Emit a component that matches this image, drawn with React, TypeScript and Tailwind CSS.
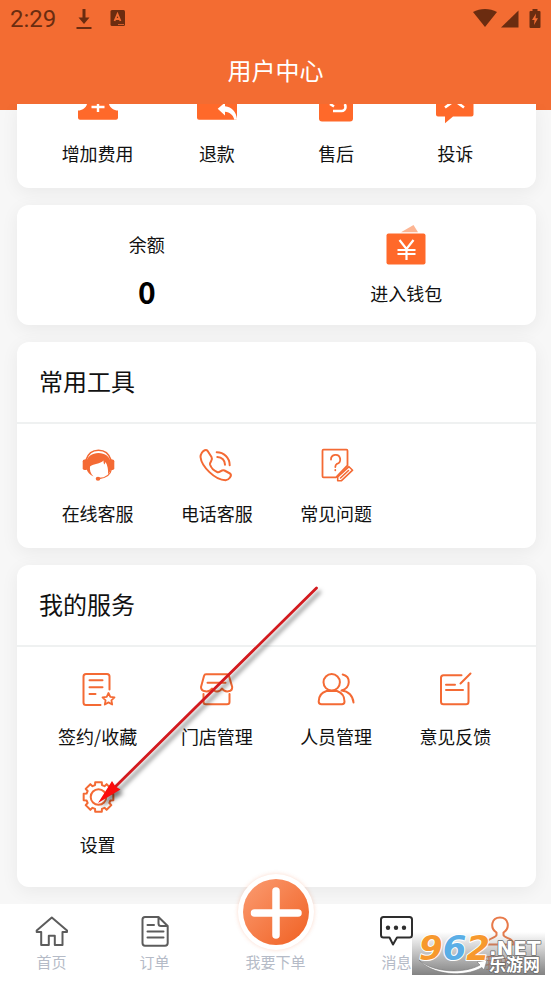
import type { ReactNode } from "react";

type Item = { label: string; icon: ReactNode };

const LineIcon = ({ children }: { children: ReactNode }) => (
  <svg
    className="size-8 overflow-visible"
    viewBox="0 0 32 32"
    fill="none"
    stroke="currentColor"
    strokeWidth="2"
    strokeLinecap="round"
    strokeLinejoin="round"
    aria-hidden="true"
  >
    {children}
  </svg>
);

// outline of a cog with eight flat teeth
const gearPath = (cx: number, cy: number, outer: number, inner: number) => {
  const points: string[] = [];
  for (let i = 0; i < 8; i++) {
    const mid = (i * Math.PI) / 4;
    const corners = [
      [inner, mid - 0.28],
      [outer, mid - 0.22],
      [outer, mid + 0.22],
      [inner, mid + 0.28],
    ];
    corners.forEach(([r, a]) => {
      points.push(
        `${(cx + r * Math.sin(a)).toFixed(2)} ${(cy - r * Math.cos(a)).toFixed(2)}`
      );
    });
  }
  return `M${points.join("L")}Z`;
};

const orderActions: Item[] = [
  {
    label: "增加费用",
    icon: (
      <svg className="h-5 w-10" viewBox="0 0 40 20" aria-hidden="true">
        <path
          d="M9 0C8 4 4 6.5 0 6.5V14a2 2 0 0 0 2 1.700H38a2 2 0 0 0 2-1.700V6.500C36 6.500 32 4 31 0Z"
          fill="#ff692a"
        />
        <path d="M20 0V8M13.500 3H26.500" stroke="#fff" strokeWidth="2.400" />
      </svg>
    ),
  },
  {
    label: "退款",
    icon: (
      <svg className="h-5 w-10" viewBox="0 0 40 20" aria-hidden="true">
        <path d="M0 0H40V13.700a2 2 0 0 1-2 2H2a2 2 0 0 1-2-2Z" fill="#ff692a" />
        <path
          d="M20.700 4.700L28-1.500V2.200C35 3 39 7.500 40 15L37.500 16C36 11 33 8.200 28 7.800V11.500Z"
          fill="#fff"
        />
      </svg>
    ),
  },
  {
    label: "售后",
    icon: (
      <svg className="h-5 w-10" viewBox="0 0 40 20" aria-hidden="true">
        <path d="M3 0H37V14.500a3 3 0 0 1-3 3H6a3 3 0 0 1-3-3Z" fill="#ff692a" />
        <path
          d="M17 7H25.500A4 4 0 0 0 29.500 3Q29.500 1 28.500 0M14 0L18 2.500"
          fill="none"
          stroke="#fff"
          strokeWidth="2.600"
        />
      </svg>
    ),
  },
  {
    label: "投诉",
    icon: (
      <svg className="h-5 w-10" viewBox="0 0 40 20" aria-hidden="true">
        <path d="M1 0H38.500V10.500a2 2 0 0 1-2 2H18L10 19.300V12.500H3a2 2 0 0 1-2-2Z" fill="#ff692a" />
        <path d="M10 3.500L19.500-3.500L29 3.500" fill="none" stroke="#fff" strokeWidth="2.600" />
      </svg>
    ),
  },
];

const tools: Item[] = [
  {
    label: "在线客服",
    icon: (
      <LineIcon>
        <path d="M4 11C6 4.500 11 1.200 16.500 1.200S27 4.500 29 11" strokeWidth="1.600" />
        <path
          d="M4 14C5 7.500 10 4 16.500 4S28 7.500 29 14V20C28.500 22 27.500 23.500 26 25.500C26.500 21 25.500 16 23.500 13L22.500 15.500C21.500 14.500 21.500 13 21.500 11.500C18 15 12 14.500 8 17.500C7.500 21 8.500 24.500 11.500 27.500C7.500 25.500 5.500 23 4.500 20Z"
          fill="currentColor"
          stroke="none"
        />
        <rect x="0.700" y="10.500" width="5" height="10.500" rx="1.800" fill="currentColor" stroke="none" />
        <rect x="27.300" y="10.500" width="5" height="10.500" rx="1.800" fill="currentColor" stroke="none" />
        <path d="M29.500 20C28.500 25.500 24 29 17 29.500" strokeWidth="1.300" />
        <ellipse cx="16" cy="29.700" rx="2.300" ry="2" fill="currentColor" stroke="none" />
      </LineIcon>
    ),
  },
  {
    label: "电话客服",
    icon: (
      <LineIcon>
        <path d="M1 3.500C2.500 1.500 5 .2 6.500 1.800L10.500 8C12.500 11.500 8.500 12.500 9 15.500C10 18.500 13.500 22 16.500 23.200C19 24 20 20.500 23.500 21.500L29 24.500C31.500 26.500 28 31 24.500 31.300C14 31 .5 17.500-.5 8C-.5 6 0 5 1 3.500Z" />
        <path d="M15.700 3.300C23 3.300 28.700 9 28.700 16.300M16.300 8C21 8 24 11.500 24 15.700" />
      </LineIcon>
    ),
  },
  {
    label: "常见问题",
    icon: (
      <LineIcon>
        <path d="M16 28.300H3.500Q2.500 28.300 2.500 27.300V1.700Q2.500.7 3.500.7H26.500Q27.500.7 27.500 1.700V16.500L16 28.300" strokeWidth="1.800" />
        <path d="M11 10.500A4.600 4.600 0 1 1 17 14.800Q15.300 15.800 15.300 18M15.300 21V21.300" strokeWidth="1.800" />
        <path d="M17.700 28L29 17.700L32.600 21.200L21.500 31.700H17.700ZM20.500 29L28.500 21.500" strokeWidth="1.600" />
      </LineIcon>
    ),
  },
];

const services: Item[] = [
  {
    label: "签约/收藏",
    icon: (
      <LineIcon>
        <path d="M18.500 33H4Q1.500 33 1.500 30.500V4.500Q1.500 2 4 2H25Q27.500 2 27.500 4.500V17.500M7.500 8.300H20.500M7.500 15.300H20.500M7.500 22H13.500" />
        <path
          d="M26.500 21L28.300 24.900L32.500 25.400L29.400 28.300L30.200 32.500L26.500 30.400L22.800 32.500L23.600 28.300L20.500 25.400L24.700 24.900Z"
          strokeWidth="1.800"
        />
      </LineIcon>
    ),
  },
  {
    label: "门店管理",
    icon: (
      <LineIcon>
        <path d="M5 2.300H26Q27.500 2.300 28 4L31.200 15C31.500 20 24 21 21 16.500C18.500 20.500 13.500 20.500 11 16.500C8 21 0 20 0 15L3 4Q3.500 2.300 5 2.300ZM6.500 10.700H24.500M2.500 22V30Q2.500 32.300 5 32.300H26Q28.500 32.300 28.500 30V22" />
      </LineIcon>
    ),
  },
  {
    label: "人员管理",
    icon: (
      <LineIcon>
        <circle cx="11.700" cy="10.300" r="8.200" />
        <path d="M6.500 19C1.500 20.500-1.300 24.500-1.300 29.500Q-1.300 32.300 1.500 32.300H22Q24.500 32.300 24.500 29.500C24.500 24.500 21.500 20.500 17 19ZM22.700 2.500C31 4.500 31 16 21.500 18.500C28.500 19 33 24 33.500 30.500" />
      </LineIcon>
    ),
  },
  {
    label: "意见反馈",
    icon: (
      <LineIcon>
        <path d="M22.500 3.300H4.500Q2 3.300 2 5.800V29.800Q2 32.300 4.500 32.300H27Q29.500 32.300 29.500 29.800V10.700M31.500 1.500L21.500 11.500M7 12.700H16M7 18H24" />
      </LineIcon>
    ),
  },
  {
    label: "设置",
    icon: (
      <LineIcon>
        <path d={gearPath(16.5, 17, 15.2, 12.4)} />
        <circle cx="16.500" cy="17" r="7.800" />
      </LineIcon>
    ),
  },
];

const StatusBar = () => (
  <div className="flex h-[38px] items-center justify-between px-2.5 text-[#6b2c10]">
    <div className="flex items-center">
      <span className="font-['Roboto',sans-serif] text-2xl leading-6">2:29</span>
      <svg className="ml-5 h-5 w-4" viewBox="0 0 16 20" fill="currentColor" aria-hidden="true">
        <path d="M6.500 0H9.500V8.500H13.500L8 15L2.500 8.500H6.500ZM.5 18H15.500V20H.5Z" />
      </svg>
      <svg className="ml-[18px] h-5 w-4" viewBox="0 0 16 20" aria-hidden="true">
        <rect x="0.500" y="1" width="14.500" height="16" rx="1.500" fill="currentColor" />
        <path d="M4.500 12L7.500 5L10.500 12M5.500 10H9.500" fill="none" stroke="#f36c32" strokeWidth="1.800" />
        <path d="M8 15.500H14" stroke="#f36c32" strokeWidth="0.800" />
      </svg>
    </div>
    <div className="flex items-center">
      <svg className="h-5 w-6" viewBox="0 0 24 20" fill="currentColor" aria-hidden="true">
        <path d="M0 3C7-1 17-1 24 3L12 18Z" />
      </svg>
      <svg className="ml-1 h-5 w-[18px]" viewBox="0 0 18 20" fill="currentColor" aria-hidden="true">
        <path d="M17.500 1.500V18.500H0Z" />
      </svg>
      <svg className="ml-2.5 h-5 w-3" viewBox="0 0 12 20" aria-hidden="true">
        <path d="M3.500 0H8.500V2H10.500Q11.500 2 11.500 3V18Q11.500 19 10.500 19H1.500Q.5 19 .5 18V3Q.5 2 1.500 2H3.500Z" fill="currentColor" />
        <path d="M7 4.500L3 11H5.500L5 16L9 9.300H6.500Z" fill="#f36c32" />
      </svg>
    </div>
  </div>
);

const Card = ({ children }: { children: ReactNode }) => (
  <section className="rounded-xl bg-white shadow-[0_4px_18px_rgba(0,0,0,0.06)]">
    {children}
  </section>
);

const CardTitle = ({ children }: { children: ReactNode }) => (
  <h2 className="flex h-[82px] items-center border-b-2 border-[#eff1f1] px-[22px] pb-0.5 text-2xl">
    {children}
  </h2>
);

const IconGrid = ({ items }: { items: Item[] }) => (
  <ul className="grid grid-cols-4 gap-y-8 px-[21px] pt-[25px]">
    {items.map(({ label, icon }) => (
      <li key={label}>
        <a href="#" className="flex flex-col items-center gap-5">
          <span className="text-[#f46a34]">{icon}</span>
          <span className="text-lg leading-6 whitespace-nowrap">{label}</span>
        </a>
      </li>
    ))}
  </ul>
);

const NavItem = ({
  label,
  icon,
  active = false,
}: {
  label: string;
  icon: ReactNode;
  active?: boolean;
}) => (
  <a href="#" className="flex flex-col items-center gap-1">
    {icon}
    <span
      className={`text-[15px] leading-5 ${
        active ? "text-[#f36c32]" : "text-[#b5bbc7]"
      }`}
    >
      {label}
    </span>
  </a>
);

const BottomNav = () => (
  <nav className="relative grid grid-cols-[1fr_1fr_139px_1fr_1fr] bg-white pt-3 pb-[9px]">
    <NavItem
      label="首页"
      icon={
        <span className="text-[#5c5c5c]">
          <LineIcon>
            <path d="M15.800 1.500L31 14.500V16H26.500V29H18.800V19.700H12.800V29H5.200V16H.7V14.500Z" />
          </LineIcon>
        </span>
      }
    />
    <NavItem
      label="订单"
      icon={
        <span className="text-[#5c5c5c]">
          <LineIcon>
            <path d="M19.500 1H6Q3.500 1 3.500 3.500V27Q3.500 29.700 6 29.700H26Q28.700 29.700 28.700 27V10ZM19.500 1V7.500Q19.500 10 22 10H28.700M8.500 9H15M8.500 15.500H24.500M8.500 21.500H24.500" />
          </LineIcon>
        </span>
      }
    />
    <a href="#" className="flex flex-col items-center justify-end">
      <span className="absolute -top-[30px] flex size-[76px] items-center justify-center rounded-full bg-white shadow-[0_0_4px_rgba(243,108,50,0.25)]">
        <svg className="size-[66px]" viewBox="0 0 66 66" aria-hidden="true">
          <defs>
            <linearGradient id="plusFill" x1="0" y1="0" x2="1" y2="1">
              <stop offset="0" stopColor="#fb9c72" />
              <stop offset="1" stopColor="#f06022" />
            </linearGradient>
          </defs>
          <circle cx="33" cy="33" r="33" fill="url(#plusFill)" />
          <path d="M33 12V56M11.500 34H55" stroke="#fff" strokeWidth="7.500" strokeLinecap="round" />
        </svg>
      </span>
      <span className="text-[15px] leading-5 text-[#b5bbc7]">我要下单</span>
    </a>
    <NavItem
      label="消息"
      icon={
        <span className="text-[#2e2e2e]">
          <LineIcon>
            <path d="M2.500 1H28.500Q31 1 31 3.500V19Q31 21.500 28.500 21.500H16L12 28.500L8.500 21.500H2.500Q0 21.500 0 19V3.500Q0 1 2.500 1Z" />
            <g fill="currentColor" stroke="none">
              <circle cx="7" cy="11.700" r="2.200" />
              <circle cx="15" cy="11.700" r="2.200" />
              <circle cx="23" cy="11.700" r="2.200" />
            </g>
          </LineIcon>
        </span>
      }
    />
    <NavItem
      active
      label="我的"
      icon={
        <span className="text-[#e87a4a]">
          <LineIcon>
            <path d="M12.500 16.500C5.500 12 7.500 1.500 16 1.500S26.500 12 19.500 16.500V19C19.500 22 30 22 30 28.500H2C2 22 12.500 22 12.500 19Z" />
          </LineIcon>
        </span>
      }
    />
  </nav>
);

const Watermark = () => (
  <svg
    className="pointer-events-none absolute right-1.5 bottom-1.5 h-[43px] w-[133px] overflow-visible"
    viewBox="0 0 133 43"
    role="img"
    aria-label="962.NET 乐游网"
  >
    <defs>
      <linearGradient id="markFade" x1="0" y1="0" x2="0" y2="1">
        <stop offset="0" stopColor="#808080" stopOpacity="0" />
        <stop offset="1" stopColor="#7c7c7c" stopOpacity="0.95" />
      </linearGradient>
    </defs>
    <rect width="133" height="43" fill="url(#markFade)" />
    <path
      d="M7 28C22 41 52 42 68 33L65 30L75 28L72 38L70 35.500C52 46 20 43 7 28Z"
      fill="#fff"
      stroke="#777"
      strokeWidth="0.600"
    />
    <g className="font-['DejaVu_Sans',sans-serif] font-bold" strokeLinejoin="round" paintOrder="stroke">
      <text x="7" y="28" fontSize="34" fontStyle="italic" stroke="#fff" strokeWidth="2">
        <tspan fill="#f7992e">9</tspan>
        <tspan fill="#5aaee6">6</tspan>
        <tspan fill="#f7992e">2</tspan>
      </text>
      <text x="77" y="23" fontSize="20" fill="#fff" stroke="#6b6b6b" strokeWidth="1.500">
        .NET
      </text>
    </g>
    <text
      x="77"
      y="39"
      className="font-['Noto_Sans_CJK_SC',sans-serif] font-bold"
      fontSize="17"
      fill="#fff"
      stroke="#6b6b6b"
      strokeWidth="1.500"
      strokeLinejoin="round"
      paintOrder="stroke"
    >
      乐游网
    </text>
  </svg>
);

// red pointer that leads to the settings entry
const Pointer = () => (
  <svg
    className="pointer-events-none absolute top-[580px] left-[90px] h-[230px] w-[236px] overflow-visible"
    viewBox="90 580 236 230"
    aria-hidden="true"
  >
    <g className="drop-shadow-[3px_4px_2px_rgba(0,0,0,0.5)]">
      <path d="M316.500 588L114 788" stroke="#d31a1f" strokeWidth="2.800" strokeLinecap="round" />
      <path d="M98 803L112 781L115.500 786.500L120.500 789.500Z" fill="#fb0d0d" />
    </g>
  </svg>
);

const App = () => {
  return (
    <div className="relative flex min-h-screen flex-col bg-[#f7f7f7] font-['Noto_Sans_CJK_SC',sans-serif] text-[#111]">
      <header className="relative z-10 bg-[#f36c32]">
        <StatusBar />
        <h1 className="flex h-[66px] items-center justify-center pb-0.5 text-2xl text-white">
          用户中心
        </h1>
      </header>

      <main className="flex flex-1 flex-col gap-[17px] bg-[linear-gradient(#f36c32_6px,transparent_6px)] pr-[15px] pb-[17px] pl-[17px]">
        <section className="rounded-b-xl bg-white px-[21px] pb-[23px] shadow-[0_4px_18px_rgba(0,0,0,0.06)]">
          <ul className="grid grid-cols-4">
            {orderActions.map(({ label, icon }) => (
              <li key={label}>
                <a href="#" className="flex flex-col items-center gap-[17px]">
                  {icon}
                  <span className="text-lg leading-6">{label}</span>
                </a>
              </li>
            ))}
          </ul>
        </section>

        <Card>
          <div className="grid h-[120px] grid-cols-2">
            <div className="flex flex-col items-center gap-[17px] pt-[27px]">
              <span className="text-lg leading-6">余额</span>
              <span className="text-3xl leading-9 font-bold text-black">0</span>
            </div>
            <a href="#" className="flex flex-col items-center gap-4 pt-5">
              <svg className="h-10 w-10" viewBox="0 0 40 40" aria-hidden="true">
                <path d="M15 7.200L27.500 0L32 7.200Z" fill="#fdb593" />
                <rect x="0.500" y="8.500" width="39" height="31" rx="2" fill="#ff692a" />
                <path
                  d="M13.500 15L20.500 24L27.500 15M20.500 24V35M11.500 25H29.500M11.500 29H29.500"
                  fill="none"
                  stroke="#fff"
                  strokeWidth="2.200"
                />
              </svg>
              <span className="text-lg leading-6">进入钱包</span>
            </a>
          </div>
        </Card>

        <Card>
          <CardTitle>常用工具</CardTitle>
          <div className="pb-[23px]">
            <IconGrid items={tools} />
          </div>
        </Card>

        <Card>
          <CardTitle>我的服务</CardTitle>
          <div className="pb-[31px]">
            <IconGrid items={services} />
          </div>
        </Card>
      </main>

      <BottomNav />
      <Pointer />
      <Watermark />
    </div>
  );
};

export default App;
